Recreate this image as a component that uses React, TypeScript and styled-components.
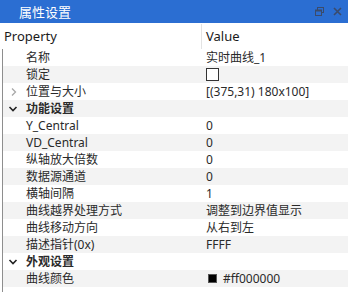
import React from "react";
import styled, { createGlobalStyle } from "styled-components";

const Global = createGlobalStyle`
  html, body { margin: 0; padding: 0; background: #ffffff; }
  body { font-family: "Segoe UI", "Noto Sans", "Noto Sans CJK SC", sans-serif; }
`;

const Window = styled.div`
  width: 348px;
  height: 292px;
  background: #ffffff;
  display: flex;
  flex-direction: column;
  overflow: hidden;
`;

const TitleBar = styled.div`
  height: 23px;
  background: #2b6ed2;
  display: flex;
  align-items: center;
  padding-left: 19px;
  padding-right: 6px;
  box-sizing: border-box;
  flex: none;
`;

const Title = styled.div`
  flex: 1;
  color: #ffffff;
  font-family: "Noto Sans CJK SC", sans-serif;
  font-size: 13px;
  line-height: 23px;
`;

const TitleButtons = styled.div`
  display: flex;
  align-items: center;
  gap: 9px;
`;

const Header = styled.div`
  display: grid;
  grid-template-columns: 202px 1fr;
  height: 25px;
  flex: none;
  margin-top: 1px;
`;

const HeaderCell = styled.div<{ $divider?: boolean }>`
  font-family: "Segoe UI", "Noto Sans", sans-serif;
  font-size: 13px;
  color: #1a1a1a;
  line-height: 25px;
  padding-left: 4px;
  border-right: ${(p) => (p.$divider ? "1px solid #e3e3e3" : "none")};
`;

const Body = styled.div`
  flex: 1;
  margin-left: 2px;
  border-left: 1px solid #8e8e8e;
  display: flex;
  flex-direction: column;
`;

const Row = styled.div<{ $alt: boolean }>`
  display: grid;
  grid-template-columns: 199px 1fr;
  height: 17px;
  background: ${(p) => (p.$alt ? "#f3f3f3" : "#ffffff")};
  font-size: 12px;
  line-height: 17px;
  color: #2a2a2a;
`;

const NameCell = styled.div<{ $bold?: boolean }>`
  position: relative;
  padding-left: 23px;
  font-family: "Segoe UI", "Noto Sans", "Noto Sans CJK SC", sans-serif;
  font-weight: ${(p) => (p.$bold ? 700 : 400)};
  white-space: nowrap;
`;

const Arrow = styled.span`
  position: absolute;
  left: 5px;
  top: 0;
  height: 17px;
  display: flex;
  align-items: center;
`;

const ValueCell = styled.div`
  padding-left: 4px;
  font-family: "Segoe UI", "Noto Sans", "Noto Sans CJK SC", sans-serif;
  white-space: nowrap;
  display: flex;
  align-items: center;
`;

const CheckBox = styled.span`
  width: 11px;
  height: 11px;
  border: 1px solid #333333;
  background: #ffffff;
`;

const Swatch = styled.span`
  width: 7px;
  height: 7px;
  background: #000000;
  border: 1px solid #555;
  margin-left: 2px;
  margin-right: 6px;
`;

type Item = {
  name: string;
  value?: React.ReactNode;
  kind?: "category" | "collapsed";
};

const RightArrow = () => (
  <svg width="8" height="10" viewBox="0 0 8 10">
    <path d="M2 1.5 L5.5 5 L2 8.5" fill="none" stroke="#a8a8a8" strokeWidth="1.3" />
  </svg>
);

const DownArrow = () => (
  <svg width="10" height="8" viewBox="0 0 10 8">
    <path d="M1.5 2 L5 5.5 L8.5 2" fill="none" stroke="#222" strokeWidth="1.6" />
  </svg>
);

const items: Item[] = [
  { name: "名称", value: "实时曲线_1" },
  { name: "锁定", value: <CheckBox /> },
  { name: "位置与大小", value: "[(375,31) 180x100]", kind: "collapsed" },
  { name: "功能设置", kind: "category" },
  { name: "Y_Central", value: "0" },
  { name: "VD_Central", value: "0" },
  { name: "纵轴放大倍数", value: "0" },
  { name: "数据源通道", value: "0" },
  { name: "横轴间隔", value: "1" },
  { name: "曲线越界处理方式", value: "调整到边界值显示" },
  { name: "曲线移动方向", value: "从右到左" },
  { name: "描述指针(0x)", value: "FFFF" },
  { name: "外观设置", kind: "category" },
  {
    name: "曲线颜色",
    value: (
      <>
        <Swatch />
        #ff000000
      </>
    ),
  },
];

export default function App() {
  return (
    <Window>
      <Global />
      <TitleBar>
        <Title>属性设置</Title>
        <TitleButtons>
          <svg width="9" height="9" viewBox="0 0 9 9">
            <rect x="2.5" y="0.5" width="6" height="5" fill="none" stroke="#3b4b6b" strokeWidth="1" />
            <rect x="0.5" y="3" width="6" height="5.5" fill="#2b6ed2" stroke="#3b4b6b" strokeWidth="1" />
            <rect x="0.5" y="3" width="6" height="1.5" fill="#3b4b6b" />
          </svg>
          <svg width="9" height="9" viewBox="0 0 9 9">
            <path d="M1 1 L8 8 M8 1 L1 8" stroke="#3b4b6b" strokeWidth="1.6" />
          </svg>
        </TitleButtons>
      </TitleBar>
      <Header>
        <HeaderCell $divider>Property</HeaderCell>
        <HeaderCell>Value</HeaderCell>
      </Header>
      <Body>
        {items.map((it, i) => (
          <Row key={it.name} $alt={i % 2 === 1}>
            <NameCell $bold={it.kind === "category"}>
              {it.kind === "category" && (
                <Arrow>
                  <DownArrow />
                </Arrow>
              )}
              {it.kind === "collapsed" && (
                <Arrow style={{ left: 7 }}>
                  <RightArrow />
                </Arrow>
              )}
              {it.name}
            </NameCell>
            <ValueCell>{it.value}</ValueCell>
          </Row>
        ))}
      </Body>
    </Window>
  );
}
